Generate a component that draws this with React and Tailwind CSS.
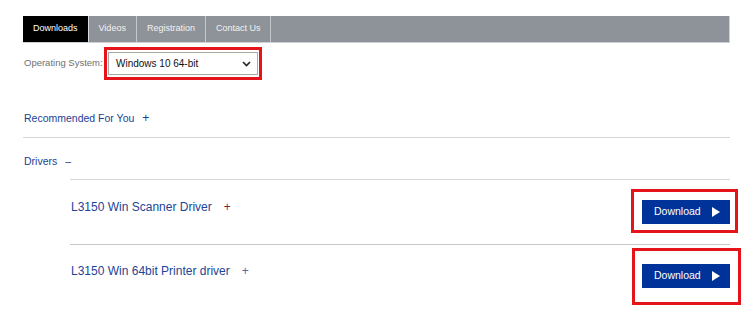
const tabs = ["Downloads", "Videos", "Registration", "Contact Us"];

function Chevron() {
  return (
    <svg width="9" height="6" viewBox="0 0 9 6" fill="none">
      <path d="M1 1l3.5 3.5L8 1" stroke="#222" strokeWidth="1.6" />
    </svg>
  );
}

function DownloadBtn() {
  return (
    <button className="flex items-center w-[88px] h-[24px] bg-[#00339a] text-white text-[10.5px] pl-[12px]">
      Download
      <svg className="ml-[11px]" width="8" height="10" viewBox="0 0 8 10">
        <path d="M0 0L8 5L0 10Z" fill="#fff" />
      </svg>
    </button>
  );
}

function App() {
  return (
    <div className="w-[750px] h-[328px] bg-white pl-[23px] pr-[20px] pt-[16px] font-['Liberation_Sans',Arial,sans-serif] overflow-hidden">
      <div className="flex h-[27px] bg-[#8e9299] border-b border-r border-[#cdd0d4]">
        {tabs.map((t, i) => (
          <div
            key={t}
            className={
              i === 0
                ? "flex items-center px-[10px] bg-black text-white text-[9px] border-r border-[#d8dadd]"
                : "flex items-center px-[10px] text-[#f2f2f2] text-[9px] border-r border-[#c4c7cc]"
            }
          >
            {t}
          </div>
        ))}
      </div>

      <div className="flex items-center mt-[4px]">
        <span className="text-[9.5px] text-[#6f6f6f] w-[81px] pl-[1px] whitespace-nowrap">
          Operating System:
        </span>
        <div className="border-[3px] border-[#e5141b] px-[1px] py-[2px]">
          <div className="flex items-center justify-between w-[150px] h-[23px] border border-[#a9a9a9] pl-[7px] pr-[6px] text-[10px] text-[#111]">
            Windows 10 64-bit
            <Chevron />
          </div>
        </div>
      </div>

      <div className="mt-[31px] pb-[12px] border-b border-[#d6d6d6] text-[10.5px] text-[#1b3f94] leading-[14px] pl-[1px]">
        Recommended For You<span className="ml-[8px] text-[12px]">+</span>
      </div>

      <div className="pt-[16px] text-[10.5px] text-[#1b3f94] leading-[14px] pl-[1px]">
        Drivers<span className="ml-[8px]">–</span>
      </div>

      <div className="ml-[47px] mt-[11px] border-t border-[#d8d8d8]">
        <div className="flex justify-between items-start h-[65px] border-b border-[#c8c8c8]">
          <div className="mt-[19px] text-[12px] leading-[16px] text-[#1d4497] pl-[1px]">
            L3150 Win Scanner Driver<span className="ml-[12px] text-[#8a2040]">+</span>
          </div>
          <div className="mt-[9px] -mr-[8px] border-[3px] border-[#e5141b] pl-[8px] pr-[5px] pt-[8px] pb-[6px]">
            <DownloadBtn />
          </div>
        </div>
        <div className="flex justify-between items-start">
          <div className="mt-[18px] text-[12px] leading-[16px] text-[#1d4497] pl-[1px]">
            L3150 Win 64bit Printer driver<span className="ml-[12px] text-[#5a6a9a]">+</span>
          </div>
          <div className="mt-[3px] -mr-[11px] border-[3px] border-[#e5141b] pl-[7px] pr-[8px] pt-[13px] pb-[14px]">
            <DownloadBtn />
          </div>
        </div>
      </div>
    </div>
  );
}

export default App;
